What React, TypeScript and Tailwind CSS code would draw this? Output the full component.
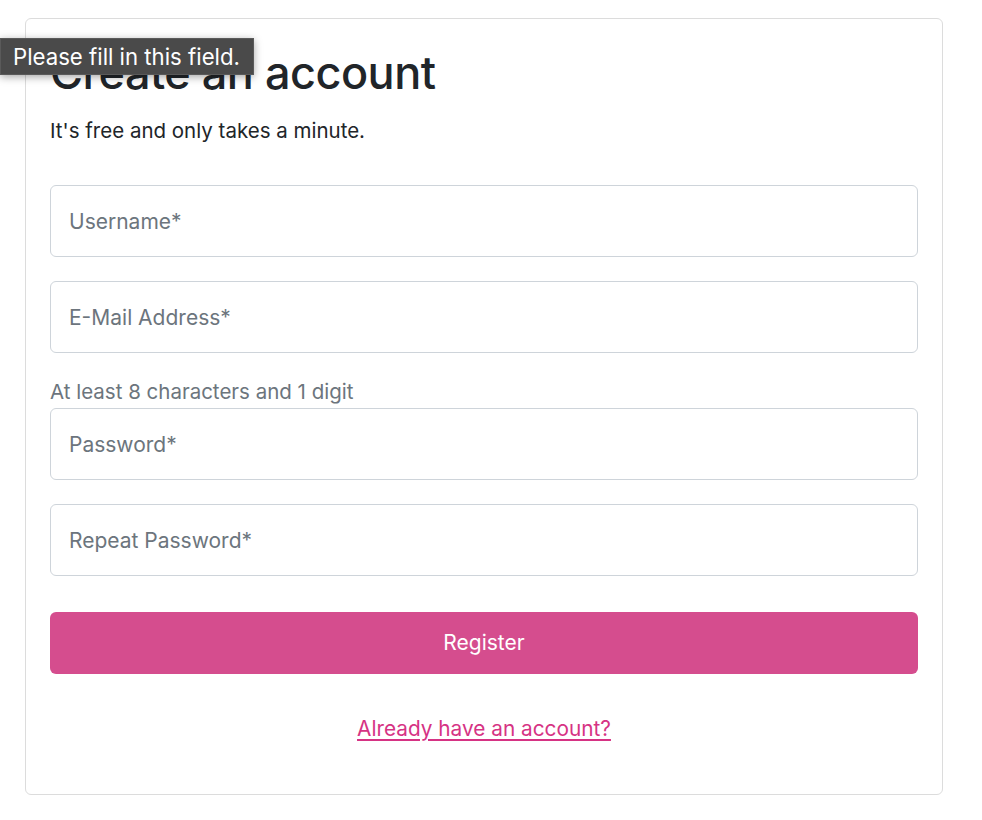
export default function App() {
	const fields = [
		{ key: "username", label: "Username*", type: "text" },
		{ key: "email", label: "E-Mail Address*", type: "email" },
	];

	return (
		<div
			className="relative min-h-[820px] w-[982px] bg-white text-[#212529]"
			style={{ fontFamily: "Inter, 'Noto Sans', sans-serif" }}
		>
			<div className="ml-[25px] pt-[18px] w-[918px]">
				<div className="border border-[#dcdcdc] rounded-[6px] px-[24px] pt-[25px] pb-[50px]">
					<h1 className="text-[45px] leading-[58px] font-medium tracking-[-0.5px]">
						Create an account
					</h1>
					<p className="mt-[14px] text-[20.5px] leading-[30px]">
						It's free and only takes a minute.
					</p>

					<form className="mt-[39px] flex flex-col">
						{fields.map((f) => (
							<input
								key={f.key}
								type={f.type}
								placeholder={f.label}
								className="mb-[24px] h-[72px] w-full rounded-[6px] border border-[#ced4da] px-[18px] text-[21px] text-[#212529] placeholder:text-[#6c757d] outline-none"
							/>
						))}
						<span className="mb-[1px] text-[20.5px] leading-[30px] text-[#6c757d]">
							At least 8 characters and 1 digit
						</span>
						<input
							type="password"
							placeholder="Password*"
							className="mb-[24px] h-[72px] w-full rounded-[6px] border border-[#ced4da] px-[18px] text-[21px] placeholder:text-[#6c757d] outline-none"
						/>
						<input
							type="password"
							placeholder="Repeat Password*"
							className="h-[72px] w-full rounded-[6px] border border-[#ced4da] px-[18px] text-[21px] placeholder:text-[#6c757d] outline-none"
						/>
						<button
							type="button"
							className="mt-[36px] h-[62px] w-full rounded-[6px] bg-[#d54d8e] text-white text-[21px]"
						>
							Register
						</button>
					</form>

					<div className="mt-[40px] text-center">
						<a
							href="#"
							className="text-[20.8px] leading-[30px] text-[#d63384] underline underline-offset-[3px]"
						>
							Already have an account?
						</a>
					</div>
				</div>
			</div>

			{/* Validation tooltip */}
			<div className="absolute left-0 top-[38px] h-[37px] w-[254px] bg-[#4a4a4a] border border-[#5a5a5a] shadow-[0_2px_8px_rgba(0,0,0,0.35)] flex items-center px-[12px] text-white text-[22.2px] whitespace-nowrap">
				Please fill in this field.
			</div>
		</div>
	);
}
